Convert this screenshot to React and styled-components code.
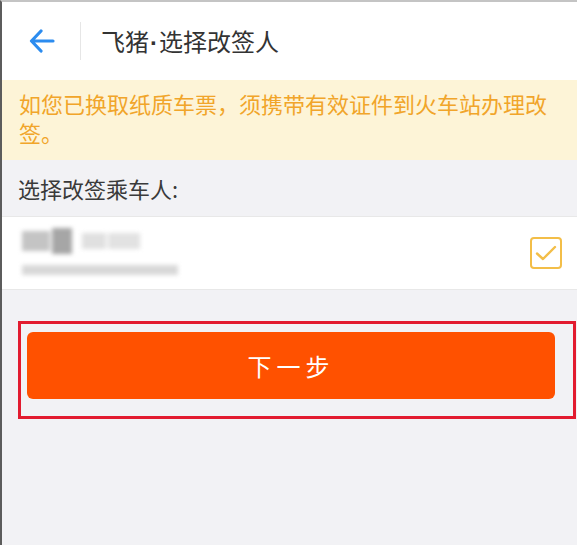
import React, { useState } from 'react';
import styled, { createGlobalStyle } from 'styled-components';

const GlobalStyle = createGlobalStyle`
  html, body {
    margin: 0;
    padding: 0;
    background: #f2f2f5;
  }
  * {
    box-sizing: border-box;
  }
`;

const Page = styled.div`
  min-height: 100vh;
  background: #f2f2f5;
  border-left: 2px solid #5c5c5c;
  border-top: 2px solid #c4c4c4;
  font-family: 'Noto Sans CJK SC', 'Noto Sans', sans-serif;
`;

const Header = styled.div`
  height: 78px;
  background: #fff;
  display: flex;
  align-items: center;
`;

const BackButton = styled.a`
  width: 78px;
  height: 100%;
  display: flex;
  align-items: center;
  justify-content: center;
  padding-left: 2px;
  cursor: pointer;
`;

const Divider = styled.div`
  width: 1px;
  height: 38px;
  background: #e6e6e6;
  margin-right: 20px;
`;

const Title = styled.h1`
  margin: 0 0 2px;
  font-size: 24px;
  font-weight: 400;
  color: #333;
`;

const Dot = styled.span`
  font-family: 'Liberation Sans', sans-serif;
  font-weight: 700;
  margin: 0 1px;
`;

const Notice = styled.div`
  background: #fdf4d7;
  color: #f1a52a;
  font-size: 22px;
  line-height: 29px;
  padding: 9px 18px 13px 17px;
`;

const SectionLabel = styled.div`
  height: 56px;
  display: flex;
  align-items: center;
  padding-left: 16px;
  font-size: 22px;
  color: #3a3a3a;
`;

const PassengerRow = styled.div`
  height: 74px;
  background: #fff;
  border-top: 1px solid #e8e8e8;
  border-bottom: 1px solid #e8e8e8;
  display: flex;
  align-items: center;
  justify-content: space-between;
  padding: 0 15px 0 20px;
`;

const Blurred = styled.div`
  display: flex;
  flex-direction: column;
  gap: 11px;
  filter: blur(2.2px);
  margin-top: -4px;
`;

const NameRow = styled.div`
  display: flex;
  align-items: center;
  gap: 2px;
`;

const Block = styled.span`
  display: block;
  width: ${(p) => p.$w}px;
  height: ${(p) => p.$h}px;
  background: ${(p) => p.$c};
  margin-left: ${(p) => p.$ml || 0}px;
`;

const IdLine = styled.span`
  display: block;
  width: 156px;
  height: 10px;
  background: #d8d8d8;
`;

const CheckBox = styled.button`
  width: 32px;
  height: 32px;
  border: 2px solid #f3be48;
  border-radius: 4px;
  background: #fff;
  padding: 0;
  display: flex;
  align-items: center;
  justify-content: center;
  cursor: pointer;
`;

const Highlight = styled.div`
  margin: 31px 1px 0 16px;
  border: 3px solid #e21b2f;
  padding: 8px 18px 17px 6px;
`;

const NextButton = styled.button`
  width: 100%;
  height: 67px;
  border: none;
  border-radius: 6px;
  background: #ff5100;
  color: #fff;
  font-family: 'Noto Sans CJK SC', 'Noto Sans', sans-serif;
  font-size: 24px;
  letter-spacing: 5px;
  cursor: pointer;
`;

const App = () => {
  const [checked, setChecked] = useState(true);

  return (
    <Page>
      <GlobalStyle />
      <Header>
        <BackButton>
          <svg width="26" height="24" viewBox="0 0 26 24" fill="none">
            <path
              d="M24 12H3M12 2L2.5 12L12 22"
              stroke="#2c8cef"
              strokeWidth="3.2"
              strokeLinecap="round"
              strokeLinejoin="round"
            />
          </svg>
        </BackButton>
        <Divider />
        <Title>
          飞猪<Dot>·</Dot>选择改签人
        </Title>
      </Header>
      <Notice>如您已换取纸质车票，须携带有效证件到火车站办理改签。</Notice>
      <SectionLabel>选择改签乘车人:</SectionLabel>
      <PassengerRow>
        <Blurred>
          <NameRow>
            <Block $w={28} $h={20} $c="#c4c4c4" />
            <Block $w={20} $h={26} $c="#a6a6a6" />
            <Block $w={24} $h={16} $c="#e0e0e0" $ml={8} />
            <Block $w={32} $h={16} $c="#e2e2e2" />
          </NameRow>
          <IdLine />
        </Blurred>
        <CheckBox onClick={() => setChecked(!checked)}>
          {checked && (
            <svg width="22" height="18" viewBox="0 0 22 18" fill="none">
              <path
                d="M2 9.5L8 15L20 3"
                stroke="#f3be48"
                strokeWidth="2.4"
                strokeLinecap="round"
                strokeLinejoin="round"
              />
            </svg>
          )}
        </CheckBox>
      </PassengerRow>
      <Highlight>
        <NextButton>下一步</NextButton>
      </Highlight>
    </Page>
  );
};

export default App;
